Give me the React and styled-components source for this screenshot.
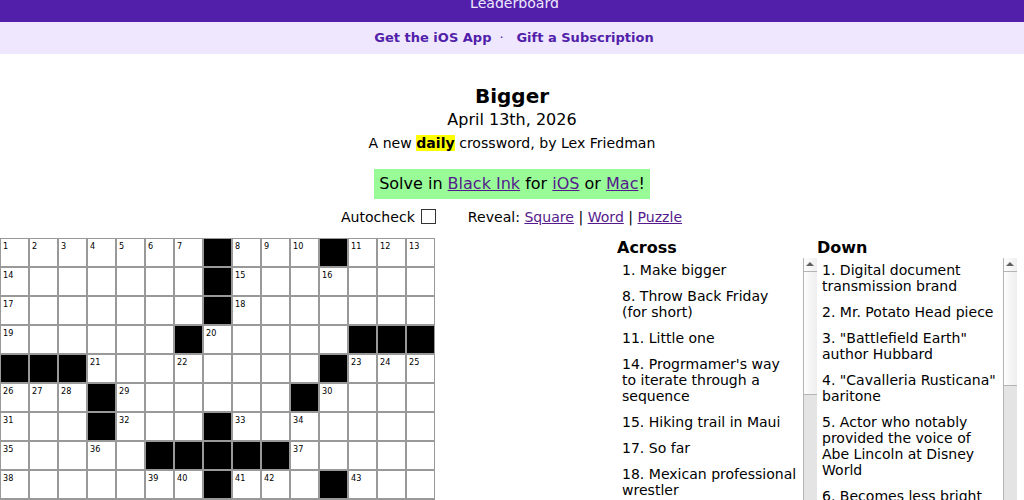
import React from "react";
import styled, { createGlobalStyle } from "styled-components";

const rows = [
  "1 2 3 4 5 6 7 # 8 9 10 # 11 12 13",
  "14 . . . . . . # 15 . . 16 . . .",
  "17 . . . . . . # 18 . . . . . .",
  "19 . . . . . # 20 . . . . # # #",
  "# # # 21 . . 22 . . . . # 23 24 25",
  "26 27 28 # 29 . . . . . # 30 . . .",
  "31 . . # 32 . . # 33 . 34 . . . .",
  "35 . . 36 . # # # # # 37 . . . .",
  "38 . . . . 39 40 # 41 42 . # 43 . .",
  ". . . . . . . . . . . . . . .",
].map((row) => row.split(" "));

const across = [
  "1. Make bigger",
  "8. Throw Back Friday (for short)",
  "11. Little one",
  "14. Progrmamer's way to iterate through a sequence",
  "15. Hiking trail in Maui",
  "17. So far",
  "18. Mexican professional wrestler",
];

const down = [
  "1. Digital document transmission brand",
  "2. Mr. Potato Head piece",
  '3. "Battlefield Earth" author Hubbard',
  '4. "Cavalleria Rusticana" baritone',
  "5. Actor who notably provided the voice of Abe Lincoln at Disney World",
  "6. Becomes less bright",
];

const ClueColumn = ({ title, clues, thumb }) => (
  <Column>
    <ClueTitle>{title}</ClueTitle>
    <ClueBody>
      <ClueList>
        {clues.map((clue) => (
          <Clue key={clue}>{clue}</Clue>
        ))}
      </ClueList>
      <Scrollbar>
        <ScrollButton>
          <Arrow viewBox="0 0 8 4">
            <path d="M4 0 L8 4 H0 Z" fill="#606060" />
          </Arrow>
        </ScrollButton>
        <Thumb $height={thumb} />
      </Scrollbar>
    </ClueBody>
  </Column>
);

const App = () => {
  return (
    <Page>
      <GlobalStyle />
      <TopBar>
        <TopLink>Leaderboard</TopLink>
      </TopBar>
      <PromoBar>
        <PromoLink href="#">Get the iOS App</PromoLink>
        <Dot>·</Dot>
        <PromoLink href="#">Gift a Subscription</PromoLink>
      </PromoBar>

      <Heading>
        <Title>Bigger</Title>
        <PuzzleDate>April 13th, 2026</PuzzleDate>
        <Byline>
          A new <Highlight>daily</Highlight> crossword, by Lex Friedman
        </Byline>
        <Banner>
          Solve in <Link href="#">Black Ink</Link> for <Link href="#">iOS</Link>{" "}
          or <Link href="#">Mac</Link>!
        </Banner>
      </Heading>

      <Controls>
        <Autocheck>
          Autocheck
          <Checkbox type="checkbox" />
        </Autocheck>
        <span>
          Reveal: <Link href="#">Square</Link> | <Link href="#">Word</Link> |{" "}
          <Link href="#">Puzzle</Link>
        </span>
      </Controls>

      <Board>
        <Grid>
          {rows.map((row, r) =>
            row.map((cell, c) => (
              <Cell key={`${r}-${c}`} $black={cell === "#"}>
                {cell === "#" || cell === "." ? null : cell}
              </Cell>
            ))
          )}
        </Grid>
        <Clues>
          <ClueColumn title="Across" clues={across} thumb={123} />
          <ClueColumn title="Down" clues={down} thumb={114} />
        </Clues>
      </Board>
    </Page>
  );
};

const GlobalStyle = createGlobalStyle`
  body {
    margin: 0;
    overflow: hidden;
    background: #fff;
    color: #000;
    font-family: "DejaVu Sans", sans-serif;
  }

  * {
    box-sizing: border-box;
  }
`;

const Page = styled.div`
  height: 500px;
  overflow: hidden;
  display: flex;
  flex-direction: column;
`;

const TopBar = styled.header`
  height: 22px;
  flex-shrink: 0;
  display: flex;
  justify-content: center;
  align-items: flex-end;
  overflow: hidden;
  padding: 0 0 10px 5px;
  background: #521fab;
`;

const TopLink = styled.span`
  color: #efe7fd;
  font-size: 14.08px;
  line-height: 17px;
`;

const PromoBar = styled.nav`
  height: 32px;
  flex-shrink: 0;
  display: flex;
  justify-content: center;
  align-items: center;
  padding: 0 0 2px 4px;
  background: #efe7fd;
  color: #521fab;
  font-size: 13px;
`;

const PromoLink = styled.a`
  color: #521fab;
  font-weight: bold;
  text-decoration: none;
`;

const Dot = styled.span`
  width: 25px;
  padding-left: 8px;
`;

const Heading = styled.div`
  display: flex;
  flex-direction: column;
  align-items: center;
  padding-top: 31px;
`;

const Title = styled.h1`
  margin: 0;
  font-size: 20px;
  line-height: 23px;
`;

const PuzzleDate = styled.div`
  font-size: 16px;
  line-height: 24px;
`;

const Byline = styled.div`
  font-size: 14.08px;
  line-height: 22px;
`;

const Highlight = styled.b`
  background: #ff0;
`;

const Banner = styled.div`
  height: 30px;
  margin-top: 15px;
  padding: 0 5px;
  background: #98fb98;
  font-size: 16px;
  line-height: 29px;
`;

const Link = styled.a`
  color: #551a8b;
`;

const Controls = styled.div`
  height: 39px;
  flex-shrink: 0;
  display: flex;
  justify-content: center;
  align-items: center;
  gap: 32px;
  padding: 0 1px 4px 0;
  font-size: 14.08px;
`;

const Autocheck = styled.label`
  display: flex;
  align-items: center;
  gap: 6px;
`;

const Checkbox = styled.input`
  appearance: none;
  width: 15px;
  height: 15px;
  margin: 0;
  border: 1px solid #333;
  background: #fff;
`;

const Board = styled.main`
  display: flex;
  justify-content: space-between;
  padding-right: 7px;
`;

const Grid = styled.div`
  display: grid;
  grid-template-columns: repeat(15, 29px);
  grid-auto-rows: 29px;
`;

const Cell = styled.div`
  border: 1px solid #999;
  padding: 2px 0 0 2px;
  background: ${(props) => (props.$black ? "#000" : "#fff")};
  font-family: "DejaVu Sans Condensed", "DejaVu Sans", sans-serif;
  font-stretch: condensed;
  font-size: 9px;
  line-height: 10px;
`;

const Clues = styled.div`
  display: flex;
`;

const Column = styled.section`
  width: 200px;
`;

const ClueTitle = styled.h2`
  height: 20px;
  margin: 0;
  font-size: 16px;
  line-height: 20px;
`;

const ClueBody = styled.div`
  display: flex;
  height: 290px;
`;

const ClueList = styled.div`
  width: 186px;
  padding: 4px 6px 0 5px;
`;

const Clue = styled.p`
  margin: 0 0 10px;
  font-size: 14.04px;
  line-height: 16px;
`;

const Scrollbar = styled.div`
  width: 14px;
  border-left: 1px solid #b4b4b4;
  background: #e4e4e4;
`;

const ScrollButton = styled.div`
  display: flex;
  justify-content: center;
  height: 13px;
  padding: 4px 1px 0 0;
  background: linear-gradient(to right, #fdfdfd, #eee);
`;

const Arrow = styled.svg`
  width: 8px;
  height: 4px;
`;

const Thumb = styled.div`
  height: ${(props) => props.$height + 1}px;
  border-top: 1px solid #b4b4b4;
  border-bottom: 1px solid #b4b4b4;
  background: linear-gradient(to right, #fdfdfd, #eee);
`;

export default App;
